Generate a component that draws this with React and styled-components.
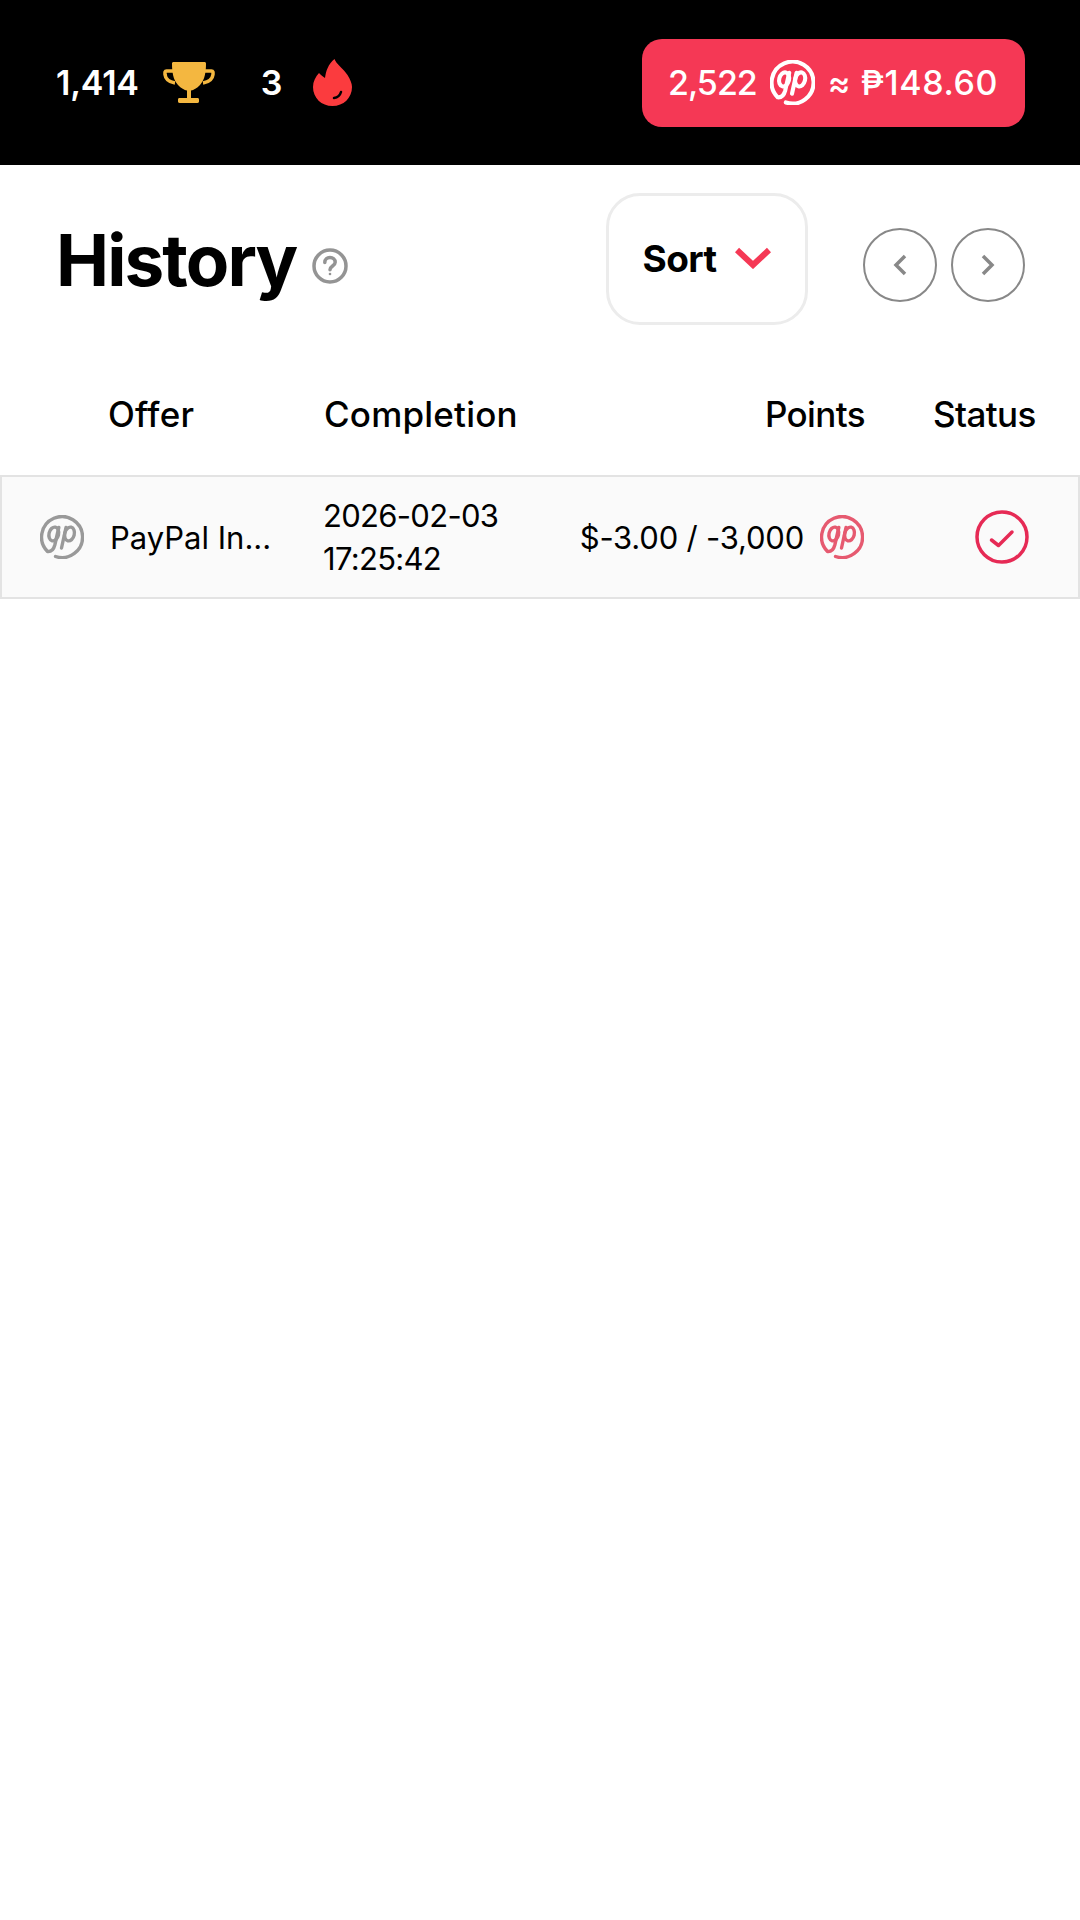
import React from "react";
import styled, { createGlobalStyle } from "styled-components";

const Global = createGlobalStyle`
  html, body { margin: 0; padding: 0; background: #fff; }
  body { font-family: "Inter", "Liberation Sans", sans-serif; color: #000; }
  * { box-sizing: border-box; }
`;

const Page = styled.div`
  width: 1080px;
  min-height: 1920px;
  background: #fff;
`;

const TopBar = styled.header`
  height: 165px;
  background: #000;
  display: flex;
  align-items: center;
  padding: 0 55px 0 56px;
`;

const Stat = styled.div`
  display: flex;
  align-items: center;
  gap: ${(p) => p.$gap}px;
  margin-right: ${(p) => p.$after || 0}px;
`;

const StatValue = styled.span`
  color: #fff;
  font-family: "Inter", sans-serif;
  font-size: 34px;
  font-weight: 600;
  letter-spacing: -0.2px;
`;

const Balance = styled.div`
  margin-left: auto;
  width: 383px;
  height: 88px;
  border-radius: 20px;
  background: #f53855;
  color: #fff;
  display: flex;
  align-items: center;
  padding-left: 26px;
  font-family: "Inter", sans-serif;
  font-size: 34px;
  font-weight: 500;
  letter-spacing: -1px;
  gap: 13px;
`;

const Amount = styled.span`
  letter-spacing: 0.6px;
`;

const Toolbar = styled.section`
  height: 200px;
  padding: 28px 55px 0 56px;
  display: flex;
  align-items: flex-start;
`;

const TitleGroup = styled.div`
  display: flex;
  align-items: center;
  gap: 16px;
  height: 130px;
`;

const Title = styled.h1`
  margin: 4px 0 0;
  font-family: "Inter", sans-serif;
  font-size: 71px;
  font-weight: 700;
  letter-spacing: -1.9px;
  line-height: 1;
`;

const HelpWrap = styled.span`
  display: flex;
  margin-top: 16px;
`;

const SortButton = styled.button`
  margin-left: auto;
  width: 202px;
  height: 132px;
  border-radius: 34px;
  border: 3px solid #ececec;
  background: #fff;
  display: flex;
  align-items: center;
  justify-content: center;
  gap: 19px;
  font-family: "Inter", sans-serif;
  font-size: 37px;
  font-weight: 700;
  letter-spacing: -0.6px;
  color: #000;
  padding: 0 0 2px;
`;

const Pager = styled.div`
  display: flex;
  gap: 14px;
  margin: 35px 0 0 55px;
`;

const PageButton = styled.button`
  width: 74px;
  height: 74px;
  border-radius: 50%;
  border: 2.5px solid #888;
  background: #fff;
  display: flex;
  align-items: center;
  justify-content: center;
  padding: 0;
  color: #888;
`;

const columns = "108px 216px 200px 341px 68px 1fr";

const HeadRow = styled.div`
  display: grid;
  grid-template-columns: ${columns};
  height: 110px;
  align-items: start;
  padding-top: 29px;
`;

const HeadCell = styled.div`
  grid-column: ${(p) => p.$col};
  font-family: "Inter", sans-serif;
  font-size: 35px;
  font-weight: 500;
  letter-spacing: ${(p) => (p.$tight ? "-0.6px" : "0.2px")};
  line-height: 40px;
  white-space: nowrap;
  text-align: ${(p) => (p.$right ? "right" : "left")};
`;

const Row = styled.div`
  display: grid;
  grid-template-columns: ${columns};
  height: 124px;
  align-items: center;
  background: #fafafa;
  border: 2px solid #e3e3e3;
  margin-top: 0;
`;

const IconCell = styled.div`
  padding-left: 38px;
  display: flex;
  color: #999;
`;

const BodyCell = styled.div`
  font-family: "Inter", sans-serif;
  font-size: 31px;
  font-weight: 400;
  line-height: 43px;
  letter-spacing: 0;
  white-space: nowrap;
`;

const DateCell = styled(BodyCell)`
  margin-left: -3px;
  letter-spacing: -0.7px;
`;

const PointsCell = styled.div`
  display: flex;
  align-items: center;
  justify-content: flex-end;
  gap: 16px;
  padding-right: 3px;
  font-family: "Inter", sans-serif;
  font-size: 31px;
  letter-spacing: -0.2px;
  color: #e65a70;
  white-space: nowrap;
`;

const PointsText = styled.span`
  color: #000;
`;

const StatusCell = styled.div`
  grid-column: 6;
  padding-left: 40px;
  display: flex;
`;

const GpLogo = ({ size = 44, weight = 3.4 }) => (
  <svg width={size} height={size} viewBox="0 0 44 44" fill="none" stroke="currentColor" strokeWidth={weight} strokeLinecap="round" strokeLinejoin="round">
    <path d="M15.500 41.500A20.500 20.500 0 1 0 7.500 36.500Q13 37 14.800 30L18.800 12.500" />
    <ellipse cx="13.800" cy="19" rx="4.800" ry="7" transform="rotate(14 13.800 19)" />
    <path d="M26 12.500L21.500 33" />
    <ellipse cx="29.500" cy="19" rx="4.800" ry="7" transform="rotate(14 29.500 19)" />
  </svg>
);

const Trophy = () => (
  <svg width="52" height="42" viewBox="0 0 52 42">
    <path fill="none" stroke="#f4b740" strokeWidth="3.500" d="M11 9H3.500C1.500 9 2 11 2 12.500 2.500 17 6 20 12 21M41 9h7.500c2 0 1.500 2 1.500 3.500C49.500 17 46 20 40 21" />
    <path fill="#f4b740" d="M9 1.500C9 .6 9.600 0 10.500 0h31c.9 0 1.500.6 1.500 1.500 0 8-1 16-6 21.500-3 3.200-6.500 5-9 5.500V36h6.500c1 0 1.500.7 1.500 1.700v1.600c0 1-.5 1.700-1.500 1.700h-18c-1 0-1.500-.7-1.500-1.700v-1.600c0-1 .5-1.700 1.500-1.700H24v-7.500c-2.500-.5-6-2.300-9-5.500C10 17.500 9 9.500 9 1.500z" />
  </svg>
);

const Flame = () => (
  <svg width="39" height="47" viewBox="0 0 39 47">
    <path fill="#fb3b3e" d="M21.500 0c1.500 5 9 9.500 13 16 2.800 4.500 4.500 8.500 4.500 12 0 11-8.500 19-19.500 19S0 39 0 28c0-5.500 2.500-10 6-14 1.500 1.500 3.500 3.500 6 5 1-7 3-13.500 9.500-19z" />
    <path fill="none" stroke="#000" strokeWidth="2.500" strokeLinecap="round" d="M21 39c3.500-.5 6-2.500 7-6" />
  </svg>
);

const HelpIcon = () => (
  <svg width="36" height="36" viewBox="0 0 36 36" fill="none" stroke="#949494" strokeWidth="3.500">
    <circle cx="18" cy="18" r="16" />
    <path strokeLinecap="round" d="M12.800 14.500c0-3 2.300-5 5.200-5s5.200 2 5.200 4.700c0 3.800-5.200 3.800-5.200 7.500" />
    <circle cx="18" cy="26" r="1.300" fill="#949494" stroke="none" />
  </svg>
);

const SortChevron = () => (
  <svg width="36" height="22" viewBox="0 0 36 22" fill="none" stroke="#f53855" strokeWidth="6">
    <path d="M2 3l16 15L34 3" />
  </svg>
);

const PageChevron = ({ dir }) => (
  <svg width="14" height="22" viewBox="0 0 14 22" fill="none" stroke="currentColor" strokeWidth="3.500">
    <path d={dir === "left" ? "M12 2L3 11l9 9" : "M2 2l9 9-9 9"} />
  </svg>
);

const CheckCircle = () => (
  <svg width="54" height="54" viewBox="0 0 54 54" fill="none" stroke="#e62a55" strokeWidth="3.500" strokeLinecap="round" strokeLinejoin="round">
    <circle cx="27" cy="27" r="25" />
    <path d="M16.500 30l7 5.500L37 22" />
  </svg>
);

export default function App() {
  return (
    <Page>
      <Global />
      <TopBar>
        <Stat $gap={24} $after={46}>
          <StatValue>1,414</StatValue>
          <Trophy />
        </Stat>
        <Stat $gap={31}>
          <StatValue>3</StatValue>
          <Flame />
        </Stat>
        <Balance>
          <span>2,522</span>
          <GpLogo size={45} weight={4} />
          <Amount>≈ ₱148.60</Amount>
        </Balance>
      </TopBar>
      <Toolbar>
        <TitleGroup>
          <Title>History</Title>
          <HelpWrap><HelpIcon /></HelpWrap>
        </TitleGroup>
        <SortButton>
          Sort
          <SortChevron />
        </SortButton>
        <Pager>
          <PageButton aria-label="Previous"><PageChevron dir="left" /></PageButton>
          <PageButton aria-label="Next"><PageChevron dir="right" /></PageButton>
        </Pager>
      </Toolbar>
      <HeadRow>
        <HeadCell $col={2}>Offer</HeadCell>
        <HeadCell $col={3}>Completion</HeadCell>
        <HeadCell $col={4} $right $tight>Points</HeadCell>
        <HeadCell $col={6} $tight>Status</HeadCell>
      </HeadRow>
      <Row>
        <IconCell><GpLogo size={44} /></IconCell>
        <BodyCell>PayPal In...</BodyCell>
        <DateCell>2026-02-03<br />17:25:42</DateCell>
        <PointsCell>
          <PointsText>$-3.00 / -3,000</PointsText>
          <GpLogo size={44} />
        </PointsCell>
        <StatusCell><CheckCircle /></StatusCell>
      </Row>
    </Page>
  );
}
